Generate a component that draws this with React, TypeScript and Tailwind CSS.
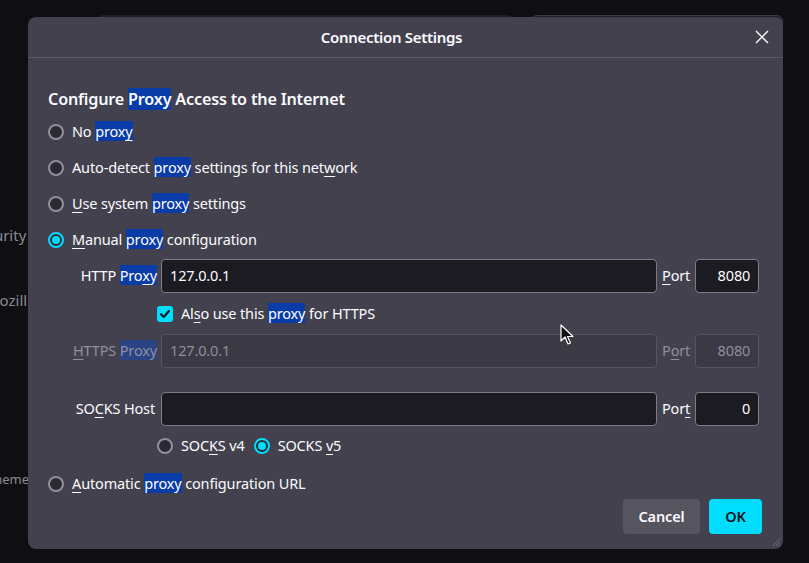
import { ReactNode } from 'react';

const font = { fontFamily: '"Noto Sans", "Open Sans", sans-serif' };

function Hl({ children, dim }: { children: ReactNode; dim?: boolean }) {
  return <span className={dim ? 'bg-[#2a4384]' : 'bg-[#0a3ca8]'}>{children}</span>;
}

function U({ children }: { children: ReactNode }) {
  return <span className="underline underline-offset-[3px] decoration-1">{children}</span>;
}

function Radio({ checked }: { checked?: boolean }) {
  return checked ? (
    <span className="w-4 h-4 rounded-full border-2 border-[#00ddff] bg-[#2b2a33] flex items-center justify-center shrink-0">
      <span className="w-2 h-2 rounded-full bg-[#00ddff]" />
    </span>
  ) : (
    <span className="w-4 h-4 rounded-full border-2 border-[#8f8f9d] bg-[#2b2a33] shrink-0" />
  );
}

function RadioRow({ checked, children }: { checked?: boolean; children: ReactNode }) {
  return (
    <div className="flex items-center gap-2 h-[36px]">
      <Radio checked={checked} />
      <span>{children}</span>
    </div>
  );
}

function Field({ value, disabled, right }: { value?: string; disabled?: boolean; right?: boolean }) {
  return (
    <div
      className={`h-[34px] rounded-[4px] border flex items-center px-2 ${right ? 'justify-end' : ''} ${
        disabled ? 'bg-[#3a3944] border-[#55545f] text-[#8f8f9d]' : 'bg-[#1c1b22] border-[#7d7c86] text-[#fbfbfe]'
      }`}
    >
      {value}
    </div>
  );
}

export default function App() {
  return (
    <div className="relative w-[809px] h-[563px] bg-[#0f0f12] overflow-hidden text-[15px] text-[#fbfbfe]" style={font}>
      {/* page behind the dialog */}
      <div className="absolute top-[15px] left-[97px] w-[416px] h-[10px] rounded-t-[6px] bg-[#1f1e25]" />
      <div className="absolute top-[15px] left-[531px] w-[252px] h-[10px] rounded-t-[6px] bg-[#1f1e25] border border-[#3a3944]" />
      <span className="absolute top-[224px] left-[-30px] text-[#8a8a92]">Security</span>
      <span className="absolute top-[289px] left-[-14px] text-[#8a8a92]">Mozilla</span>
      <span className="absolute top-[470px] left-[-13px] text-[13px] text-[#8a8a92]">Theme</span>

      {/* dialog */}
      <div className="absolute top-[17px] left-[28px] w-[755px] h-[532px] bg-[#42414d] rounded-[8px] flex flex-col">
        <div className="h-[41px] border-b border-[#5b5a66] flex items-center justify-center pr-[28px] relative">
          <span className="font-semibold text-[15px] tracking-[-0.3px]">Connection Settings</span>
          <svg className="absolute right-[14px] top-[13px]" width="14" height="14" viewBox="0 0 14 14">
            <path d="M1 1L13 13M13 1L1 13" stroke="#fbfbfe" strokeWidth="1.4" />
          </svg>
        </div>

        <div className="flex-1 flex flex-col pl-[20px] pr-[25px] pt-[30px] text-[14.5px] tracking-[-0.15px]">
          <h2 className="font-semibold text-[16.2px] leading-[22px] tracking-[-0.2px]">
            Configure <Hl>Proxy</Hl> Access to the Internet
          </h2>
          <div className="mt-[4px] flex flex-col">
            <RadioRow>No <Hl>prox<U>y</U></Hl></RadioRow>
            <RadioRow>Auto-detect <Hl>proxy</Hl> settings for this net<U>w</U>ork</RadioRow>
            <RadioRow><U>U</U>se system <Hl>proxy</Hl> settings</RadioRow>
            <RadioRow checked><U>M</U>anual <Hl>proxy</Hl> configuration</RadioRow>
          </div>

          <div className="mt-[1px] grid grid-cols-[109px_496px_auto_64px] gap-x-[4px] items-center">
            <span className="text-right">HTTP <Hl>Pro<U>x</U>y</Hl></span>
            <Field value="127.0.0.1" />
            <span className="px-[1px]"><U>P</U>ort</span>
            <Field value="8080" right />

            <div className="col-start-2 col-span-3 flex items-center gap-2 h-[41px] -ml-[4px]">
              <span className="w-4 h-4 rounded-[3px] bg-[#00ddff] flex items-center justify-center">
                <svg width="12" height="12" viewBox="0 0 12 12">
                  <path d="M2 6.2L4.8 9L10 3" stroke="#15141a" strokeWidth="2" fill="none" strokeLinecap="round" strokeLinejoin="round" />
                </svg>
              </span>
              <span>Al<U>s</U>o use this <Hl>proxy</Hl> for HTTPS</span>
            </div>

            <span className="text-right text-[#8f8f9d]"><U>H</U>TTPS <Hl dim>Proxy</Hl></span>
            <Field value="127.0.0.1" disabled />
            <span className="px-[1px] text-[#8f8f9d]">P<U>o</U>rt</span>
            <Field value="8080" disabled right />

            <div className="col-span-4 h-[24px]" />

            <span className="text-right pr-[2px]">SO<U>C</U>KS Host</span>
            <Field />
            <span className="px-[1px]">Por<U>t</U></span>
            <Field value="0" right />

            <div className="col-start-2 col-span-3 flex items-center h-[40px] -ml-[4px] gap-2">
              <Radio />
              <span className="mr-[1px]">SOC<U>K</U>S v4</span>
              <Radio checked />
              <span>SOCKS <U>v</U>5</span>
            </div>
          </div>

          <RadioRow><U>A</U>utomatic <Hl>proxy</Hl> configuration URL</RadioRow>

          <div className="flex justify-end gap-[9px] mt-[-3px] mr-[-4px] text-[14.5px] font-semibold">
            <button className="h-[35px] w-[77px] rounded-[4px] bg-[#55545f] text-[#fbfbfe]">Cancel</button>
            <button className="h-[35px] w-[53px] rounded-[4px] bg-[#00ddff] text-[#15141a]">OK</button>
          </div>
        </div>

        {/* resize grip */}
        <svg className="absolute right-[2px] bottom-[2px]" width="9" height="9" viewBox="0 0 9 9">
          <path d="M8 1L1 8M8 4L4 8M8 7L7 8" stroke="#6b6a75" strokeWidth="1" />
        </svg>
      </div>

      {/* mouse cursor */}
      <svg className="absolute left-[560px] top-[324px]" width="14" height="22" viewBox="0 0 14 22">
        <path d="M1 1L1 17L5 13L8 20L10.5 19L7.5 12.5L13 12.5Z" fill="#111" stroke="#fff" strokeWidth="1.2" strokeLinejoin="round" />
      </svg>
    </div>
  );
}
